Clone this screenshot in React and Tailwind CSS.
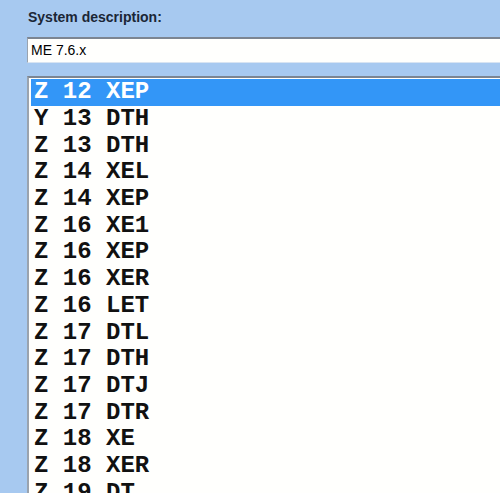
import React from 'react';

// Entries shown in the ECU variant list
const variants = [
  'Z 12 XEP',
  'Y 13 DTH',
  'Z 13 DTH',
  'Z 14 XEL',
  'Z 14 XEP',
  'Z 16 XE1',
  'Z 16 XEP',
  'Z 16 XER',
  'Z 16 LET',
  'Z 17 DTL',
  'Z 17 DTH',
  'Z 17 DTJ',
  'Z 17 DTR',
  'Z 18 XE',
  'Z 18 XER',
  'Z 19 DT',
];

export default function App() {
  const selected = 0;

  return (
    <div className="h-[493px] w-[500px] overflow-hidden bg-[#a7c9f0] pl-[27px] font-['Liberation_Sans',Arial,sans-serif]">
      <div className="pt-[9px] pl-[1px] text-[14px] font-bold leading-[17px] text-[#1b2636]">
        System description:
      </div>

      {/* read-only text field */}
      <div className="mt-[11px] flex h-[26px] items-center border-t-2 border-l border-t-[#7c8592] border-l-[#9aa3ae] border-b border-b-[#d8e4f2] bg-[#fffffd] pl-[3px] text-[14px] text-black">
        ME 7.6.x
      </div>

      {/* list box */}
      <div className="mt-[13px] h-[500px] border-t-2 border-l-2 border-t-[#7c8592] border-l-[#9aa3ae] bg-[#fffffd] pt-[1px] pl-[2px]">
        {variants.map((v, i) => (
          <div
            key={v + i}
            className={`flex h-[26.7px] items-center whitespace-pre pl-[3px] font-['Liberation_Mono','Courier_New',monospace] text-[24px] font-bold ${
              i === selected ? 'bg-[#3396f7] text-white' : 'text-[#111]'
            }`}
          >
            {v}
          </div>
        ))}
      </div>
    </div>
  );
}
